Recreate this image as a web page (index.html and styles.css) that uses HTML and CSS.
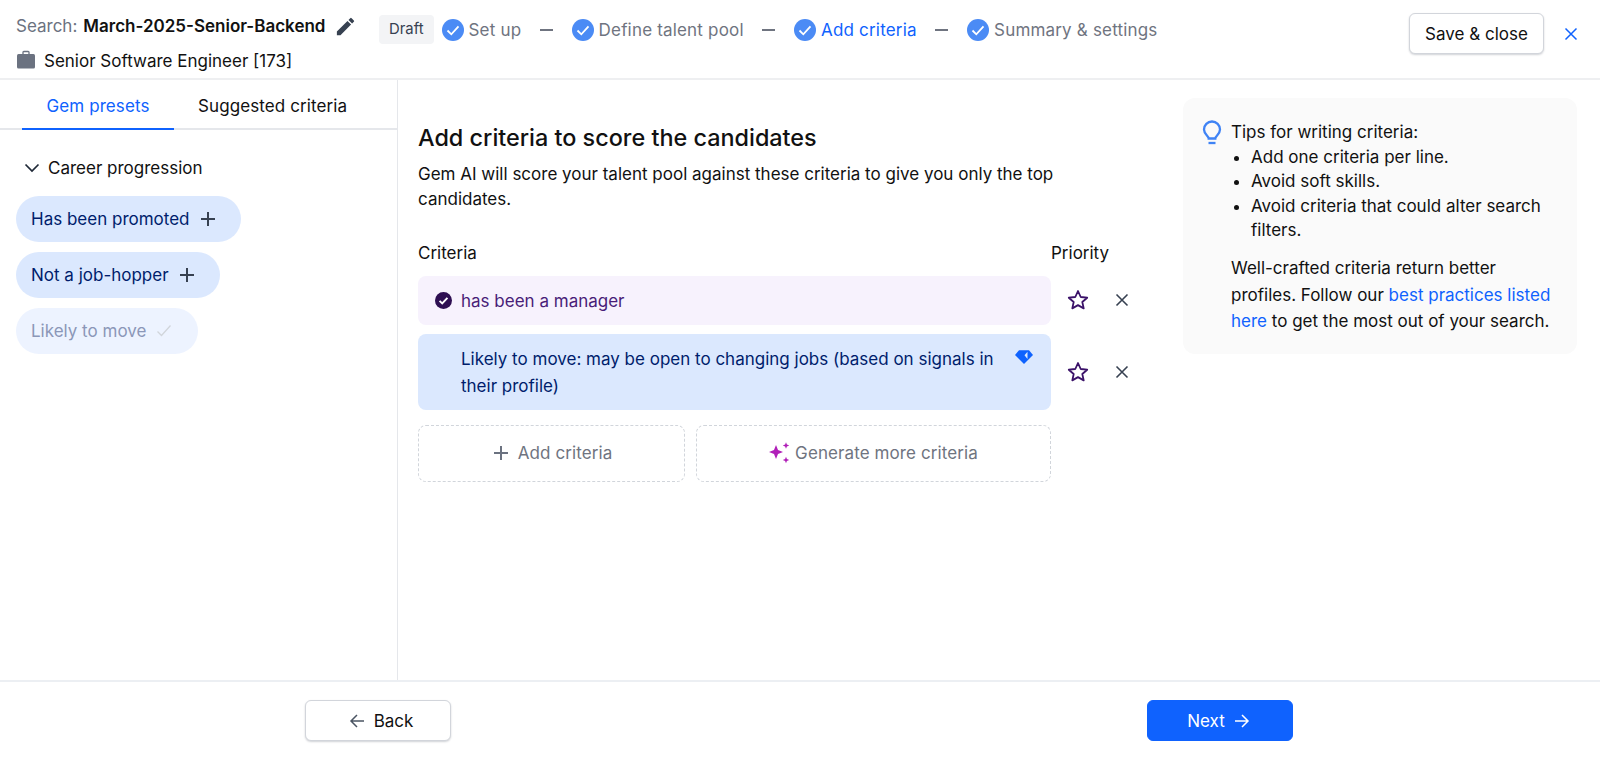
FILE: index.html
```html
<!DOCTYPE html>
<html lang="en">
<head>
<meta charset="utf-8">
<title>Add criteria</title>
<link rel="stylesheet" href="styles.css">
</head>
<body>
<div class="app">
  <header class="topbar">
    <div class="search-info">
      <div class="search-name">
        <span class="muted">Search:</span> <strong>March-2025-Senior-Backend</strong>
        <svg class="edit" viewBox="0 0 24 24" width="23" height="23"><path fill="#374151" d="M3 17.25V21h3.75L17.81 9.94l-3.75-3.75L3 17.25zM20.71 7.04a1 1 0 0 0 0-1.41l-2.34-2.34a1 1 0 0 0-1.41 0l-1.83 1.83 3.75 3.75 1.83-1.83z"/></svg>
      </div>
      <div class="job">
        <svg viewBox="0 0 20 20" width="20" height="20"><rect x="1" y="4" width="18" height="14.500" rx="1.500" fill="#6b7280"/><path d="M7 4.500V2.300a.8.8 0 0 1 .8-.8h4.400a.8.8 0 0 1 .8.8v2.200" fill="none" stroke="#6b7280" stroke-width="1.300"/></svg>
        <span>Senior Software Engineer [173]</span>
      </div>
    </div>
    <nav class="steps">
      <span class="draft">Draft</span>
      <span class="step"><svg class="check" viewBox="0 0 22 22" width="22" height="22"><circle cx="11" cy="11" r="11" fill="#4b8bf5"/><path d="M5.500 11.500l3.800 3.800 7.200-8" fill="none" stroke="#fff" stroke-width="1.800"/></svg>Set up</span>
      <span class="dash"></span>
      <span class="step"><svg class="check" viewBox="0 0 22 22" width="22" height="22"><circle cx="11" cy="11" r="11" fill="#4b8bf5"/><path d="M5.500 11.500l3.800 3.800 7.200-8" fill="none" stroke="#fff" stroke-width="1.800"/></svg>Define talent pool</span>
      <span class="dash"></span>
      <span class="step current"><svg class="check" viewBox="0 0 22 22" width="22" height="22"><circle cx="11" cy="11" r="11" fill="#4b8bf5"/><path d="M5.500 11.500l3.800 3.800 7.200-8" fill="none" stroke="#fff" stroke-width="1.800"/></svg>Add criteria</span>
      <span class="dash"></span>
      <span class="step"><svg class="check" viewBox="0 0 22 22" width="22" height="22"><circle cx="11" cy="11" r="11" fill="#4b8bf5"/><path d="M5.500 11.500l3.800 3.800 7.200-8" fill="none" stroke="#fff" stroke-width="1.800"/></svg>Summary &amp; settings</span>
    </nav>
    <div class="top-actions">
      <button class="btn save">Save &amp; close</button>
      <svg class="close" viewBox="0 0 14 14" width="14" height="14"><path d="M1.500 1.500l11 11M12.500 1.500l-11 11" stroke="#0f62fe" stroke-width="1.500" fill="none"/></svg>
    </div>
  </header>

  <div class="body">
    <aside class="sidebar">
      <div class="tabs">
        <span class="tab active">Gem presets</span>
        <span class="tab">Suggested criteria</span>
      </div>
      <div class="group-head">
        <svg viewBox="0 0 16 16" width="16" height="16"><path d="M1.500 4.500L8 11l6.500-6.500" fill="none" stroke="#1f2937" stroke-width="1.700"/></svg>
        <span>Career progression</span>
      </div>
      <div class="pills">
        <div class="pill">Has been promoted
          <svg viewBox="0 0 16 16" width="16" height="16"><path d="M8 1v14M1 8h14" stroke="#374151" stroke-width="2"/></svg>
        </div>
        <div class="pill">Not a job-hopper
          <svg viewBox="0 0 16 16" width="16" height="16"><path d="M8 1v14M1 8h14" stroke="#374151" stroke-width="2"/></svg>
        </div>
        <div class="pill disabled">Likely to move
          <svg viewBox="0 0 16 16" width="16" height="16"><path d="M1.500 8.500l4 4 9-10" fill="none" stroke="#d1d5db" stroke-width="1.300"/></svg>
        </div>
      </div>
    </aside>

    <main class="content">
      <section class="criteria">
        <h1>Add criteria to score the candidates</h1>
        <p class="lead">Gem AI will score your talent pool against these criteria to give you only the top candidates.</p>
        <div class="labels"><span class="label-crit">Criteria</span><span>Priority</span></div>
        <div class="row">
          <div class="crit purple">
            <svg viewBox="0 0 16 16" width="17" height="17"><circle cx="8" cy="8" r="8" fill="#2e0f52"/><path d="M4.300 8.300l2.500 2.500 4.900-5.300" fill="none" stroke="#fff" stroke-width="1.800"/></svg>
            <span>has been a manager</span>
          </div>
          <div class="row-actions">
            <svg viewBox="0 0 22 22" width="22" height="22"><path d="M11 2l2.700 6 6.500.7-4.900 4.300 1.400 6.400L11 16.100l-5.700 3.300 1.400-6.400L1.800 8.700 8.300 8z" fill="none" stroke="#3b1269" stroke-width="1.800" stroke-linejoin="round"/></svg>
            <svg viewBox="0 0 14 14" width="14" height="14"><path d="M1.500 1.500l11 11M12.500 1.500l-11 11" stroke="#374151" stroke-width="1.600" fill="none"/></svg>
          </div>
        </div>
        <div class="row">
          <div class="crit blue">
            <span class="crit-text">Likely to move: may be open to changing jobs (based on signals in their profile)</span>
            <svg class="gem" viewBox="0 0 18 14" width="18" height="14"><path fill="#0f62fe" d="M4 .3h10l4 4.700L9 14 0 5z"/><path fill="#dbe8fe" d="M12.500 1.700L9.500 5.300l3 3.700z"/></svg>
          </div>
          <div class="row-actions">
            <svg viewBox="0 0 22 22" width="22" height="22"><path d="M11 2l2.700 6 6.500.7-4.900 4.300 1.400 6.400L11 16.100l-5.700 3.300 1.400-6.400L1.800 8.700 8.300 8z" fill="none" stroke="#3b1269" stroke-width="1.800" stroke-linejoin="round"/></svg>
            <svg viewBox="0 0 14 14" width="14" height="14"><path d="M1.500 1.500l11 11M12.500 1.500l-11 11" stroke="#374151" stroke-width="1.600" fill="none"/></svg>
          </div>
        </div>
        <div class="add-row">
          <div class="dashed add">
            <svg viewBox="0 0 16 16" width="16" height="16"><path d="M8 1v14M1 8h14" stroke="#6b7280" stroke-width="2"/></svg>
            Add criteria
          </div>
          <div class="dashed generate">
            <svg viewBox="0 0 22 22" width="22" height="22"><path fill="#b01fb8" d="M7 3l2 5 5 2-5 2-2 5-2-5-5-2 5-2zM17 .3l.9 2.300 2.300.9-2.300.9-.9 2.300-.9-2.300-2.300-.9 2.300-.9zM17 14.800l.9 2.300 2.300.9-2.300.9-.9 2.300-.9-2.300-2.300-.9 2.300-.9z"/></svg>
            Generate more criteria
          </div>
        </div>
      </section>
      <aside class="tips">
        <svg class="bulb" viewBox="0 0 20 26" width="20" height="26"><path d="M6.700 18.500c0-2.500-4.700-4.200-4.700-9a8 8 0 0 1 16 0c0 4.800-4.700 6.500-4.700 9z" fill="none" stroke="#3f83f5" stroke-width="2.300"/><path d="M6.500 23h7" stroke="#3f83f5" stroke-width="2.300"/></svg>
        <div class="tips-text">
          <div>Tips for writing criteria:</div>
          <ul>
            <li>Add one criteria per line.</li>
            <li>Avoid soft skills.</li>
            <li>Avoid criteria that could alter search filters.</li>
          </ul>
          <p>Well-crafted criteria return better profiles. Follow our <a href="#">best practices listed here</a> to get the most out of your search.</p>
        </div>
      </aside>
    </main>
  </div>

  <footer class="footer">
    <button class="btn back">
      <svg viewBox="0 0 16 16" width="16" height="16"><path d="M15 8H2M8 2L2 8l6 6" fill="none" stroke="#4b5563" stroke-width="1.500"/></svg>
      Back
    </button>
    <button class="btn next">
      Next
      <svg viewBox="0 0 16 16" width="16" height="16"><path d="M1 8h13M8 2l6 6-6 6" fill="none" stroke="#fff" stroke-width="1.500"/></svg>
    </button>
  </footer>
</div>
</body>
</html>
```

FILE: styles.css
```css
* { box-sizing: border-box; }
html, body { margin: 0; height: 100%; }
body {
  font-family: Inter, "Noto Sans", sans-serif;
  font-size: 17px;
  line-height: 26px;
  color: #111;
  background: #fff;
}
.app { height: 758px; display: flex; flex-direction: column; overflow: hidden; }
svg { flex: none; display: block; }

.topbar {
  height: 80px;
  flex: none;
  border-bottom: 2px solid #eeeff1;
  display: flex;
  align-items: flex-start;
  padding: 0 22px 0 16px;
}
.search-info { width: 363px; flex: none; padding-top: 13px; }
.search-name { display: flex; align-items: center; gap: 6px; height: 26px; }
.search-name strong { font-weight: 600; }
.muted { color: #6b7280; }
.edit { margin-left: 3px; }
.job { display: flex; align-items: center; gap: 8px; margin-top: 9px; height: 26px; }
.job svg { margin-top: -3px; }

.steps { display: flex; align-items: center; padding-top: 15px; height: 44px; color: #6f7480; letter-spacing: .18px; }
.draft {
  background: #f3f4f6;
  border-radius: 4px;
  color: #374151;
  font-size: 14.875px;
  letter-spacing: 0;
  height: 29px;
  line-height: 29px;
  padding: 0 10px;
  margin-right: 8px;
}
.step { display: flex; align-items: center; gap: 5px; }
.step.current { color: #0f62fe; }
.dash { width: 13px; height: 2px; background: #6f7480; margin: 0 18.7px; }

.top-actions { margin-left: auto; display: flex; align-items: center; gap: 20px; padding-top: 13px; }
.btn {
  font: inherit;
  color: #111;
  background: #fff;
  border: 1px solid #d2d5db;
  border-radius: 6px;
  box-shadow: 0 1px 2px rgba(20, 30, 50, .2);
  height: 41px;
  display: flex;
  align-items: center;
  justify-content: center;
  gap: 8px;
}
.save { width: 135px; }
.close { margin-top: 1px; }

.body { flex: 1; display: flex; min-height: 0; }
.sidebar { width: 398px; flex: none; border-right: 1px solid #e5e7eb; }
.tabs { display: flex; height: 50px; border-bottom: 2px solid #e5e7eb; padding-left: 22px; }
.tab { height: 50px; line-height: 52px; letter-spacing: .1px; }
.tab.active { color: #0f62fe; width: 152px; text-align: center; border-bottom: 2px solid #0f62fe; }
.tab:not(.active) { margin-left: 24px; }
.group-head { display: flex; align-items: center; gap: 8px; padding: 25px 0 0 24px; height: 51px; }
.pills { display: flex; flex-direction: column; align-items: flex-start; gap: 10px; padding: 15px 0 0 16px; }
.pill {
  height: 46px;
  border-radius: 23px;
  background: #dbe8fe;
  color: #001d6c;
  display: flex;
  align-items: center;
  gap: 10px;
  padding: 0 25px 0 15px;
}
.pill.disabled { background: #edf3ff; color: #8b97b8; padding-right: 26px; }

.content { flex: 1; display: flex; min-width: 0; padding-left: 20px; }
.criteria { width: 765px; flex: none; padding-top: 43px; }
h1 { font-size: 23.4px; line-height: 30px; font-weight: 500; margin: 0; }
.lead { margin: 8.5px 0 0; width: 660px; line-height: 25.5px; }
.labels { display: flex; margin-top: 27px; }
.label-crit { width: 633px; }
.row { display: flex; align-items: center; margin-top: 9px; }
.labels + .row { margin-top: 10px; }
.crit { width: 633px; border-radius: 8px; display: flex; align-items: flex-start; gap: 9px; }
.purple { background: #f7f2fd; color: #491d78; height: 49px; align-items: center; padding: 1px 0 0 17px; }
.blue { background: #dbe8fe; color: #001d6c; height: 76px; padding: 12px 0 0 43px; position: relative; line-height: 27.5px; }
.crit-text { width: 560px; }
.gem { position: absolute; top: 16px; right: 18px; }
.row-actions { display: flex; align-items: center; gap: 26px; padding-left: 16px; }
.add-row { display: flex; gap: 11px; margin-top: 15px; width: 633px; }
.dashed {
  height: 57px;
  border: 1.500px dashed #d1d5db;
  border-radius: 8px;
  color: #6f7480;
  letter-spacing: .1px;
  display: flex;
  align-items: center;
  justify-content: center;
  gap: 9px;
}
.add { width: 267px; padding-left: 2px; }
.generate { flex: 1; gap: 4px; }

.tips {
  width: 394px;
  height: 256px;
  flex: none;
  margin-top: 18px;
  background: #fafafa;
  border-radius: 12px;
  padding: 22px 24px 0 19px;
  display: flex;
  gap: 9px;
}
.tips-text { flex: 1; line-height: 24.5px; }
.tips ul { margin: 0; padding: 0 0 0 20px; }
.tips p { margin: 12.5px 0 0; line-height: 26.5px; }
.tips a { color: #0f62fe; text-decoration: none; }

.footer {
  height: 78px;
  flex: none;
  border-top: 2px solid #eceff3;
  display: flex;
  justify-content: space-between;
  align-items: flex-start;
  padding: 18px 307px 0 305px;
}
.back { width: 146px; gap: 9px; padding-left: 12px; }
.next { width: 146px; gap: 9px; padding-right: 9px; background: #0f62fe; color: #fff; border-color: #0f62fe; box-shadow: none; }
```
